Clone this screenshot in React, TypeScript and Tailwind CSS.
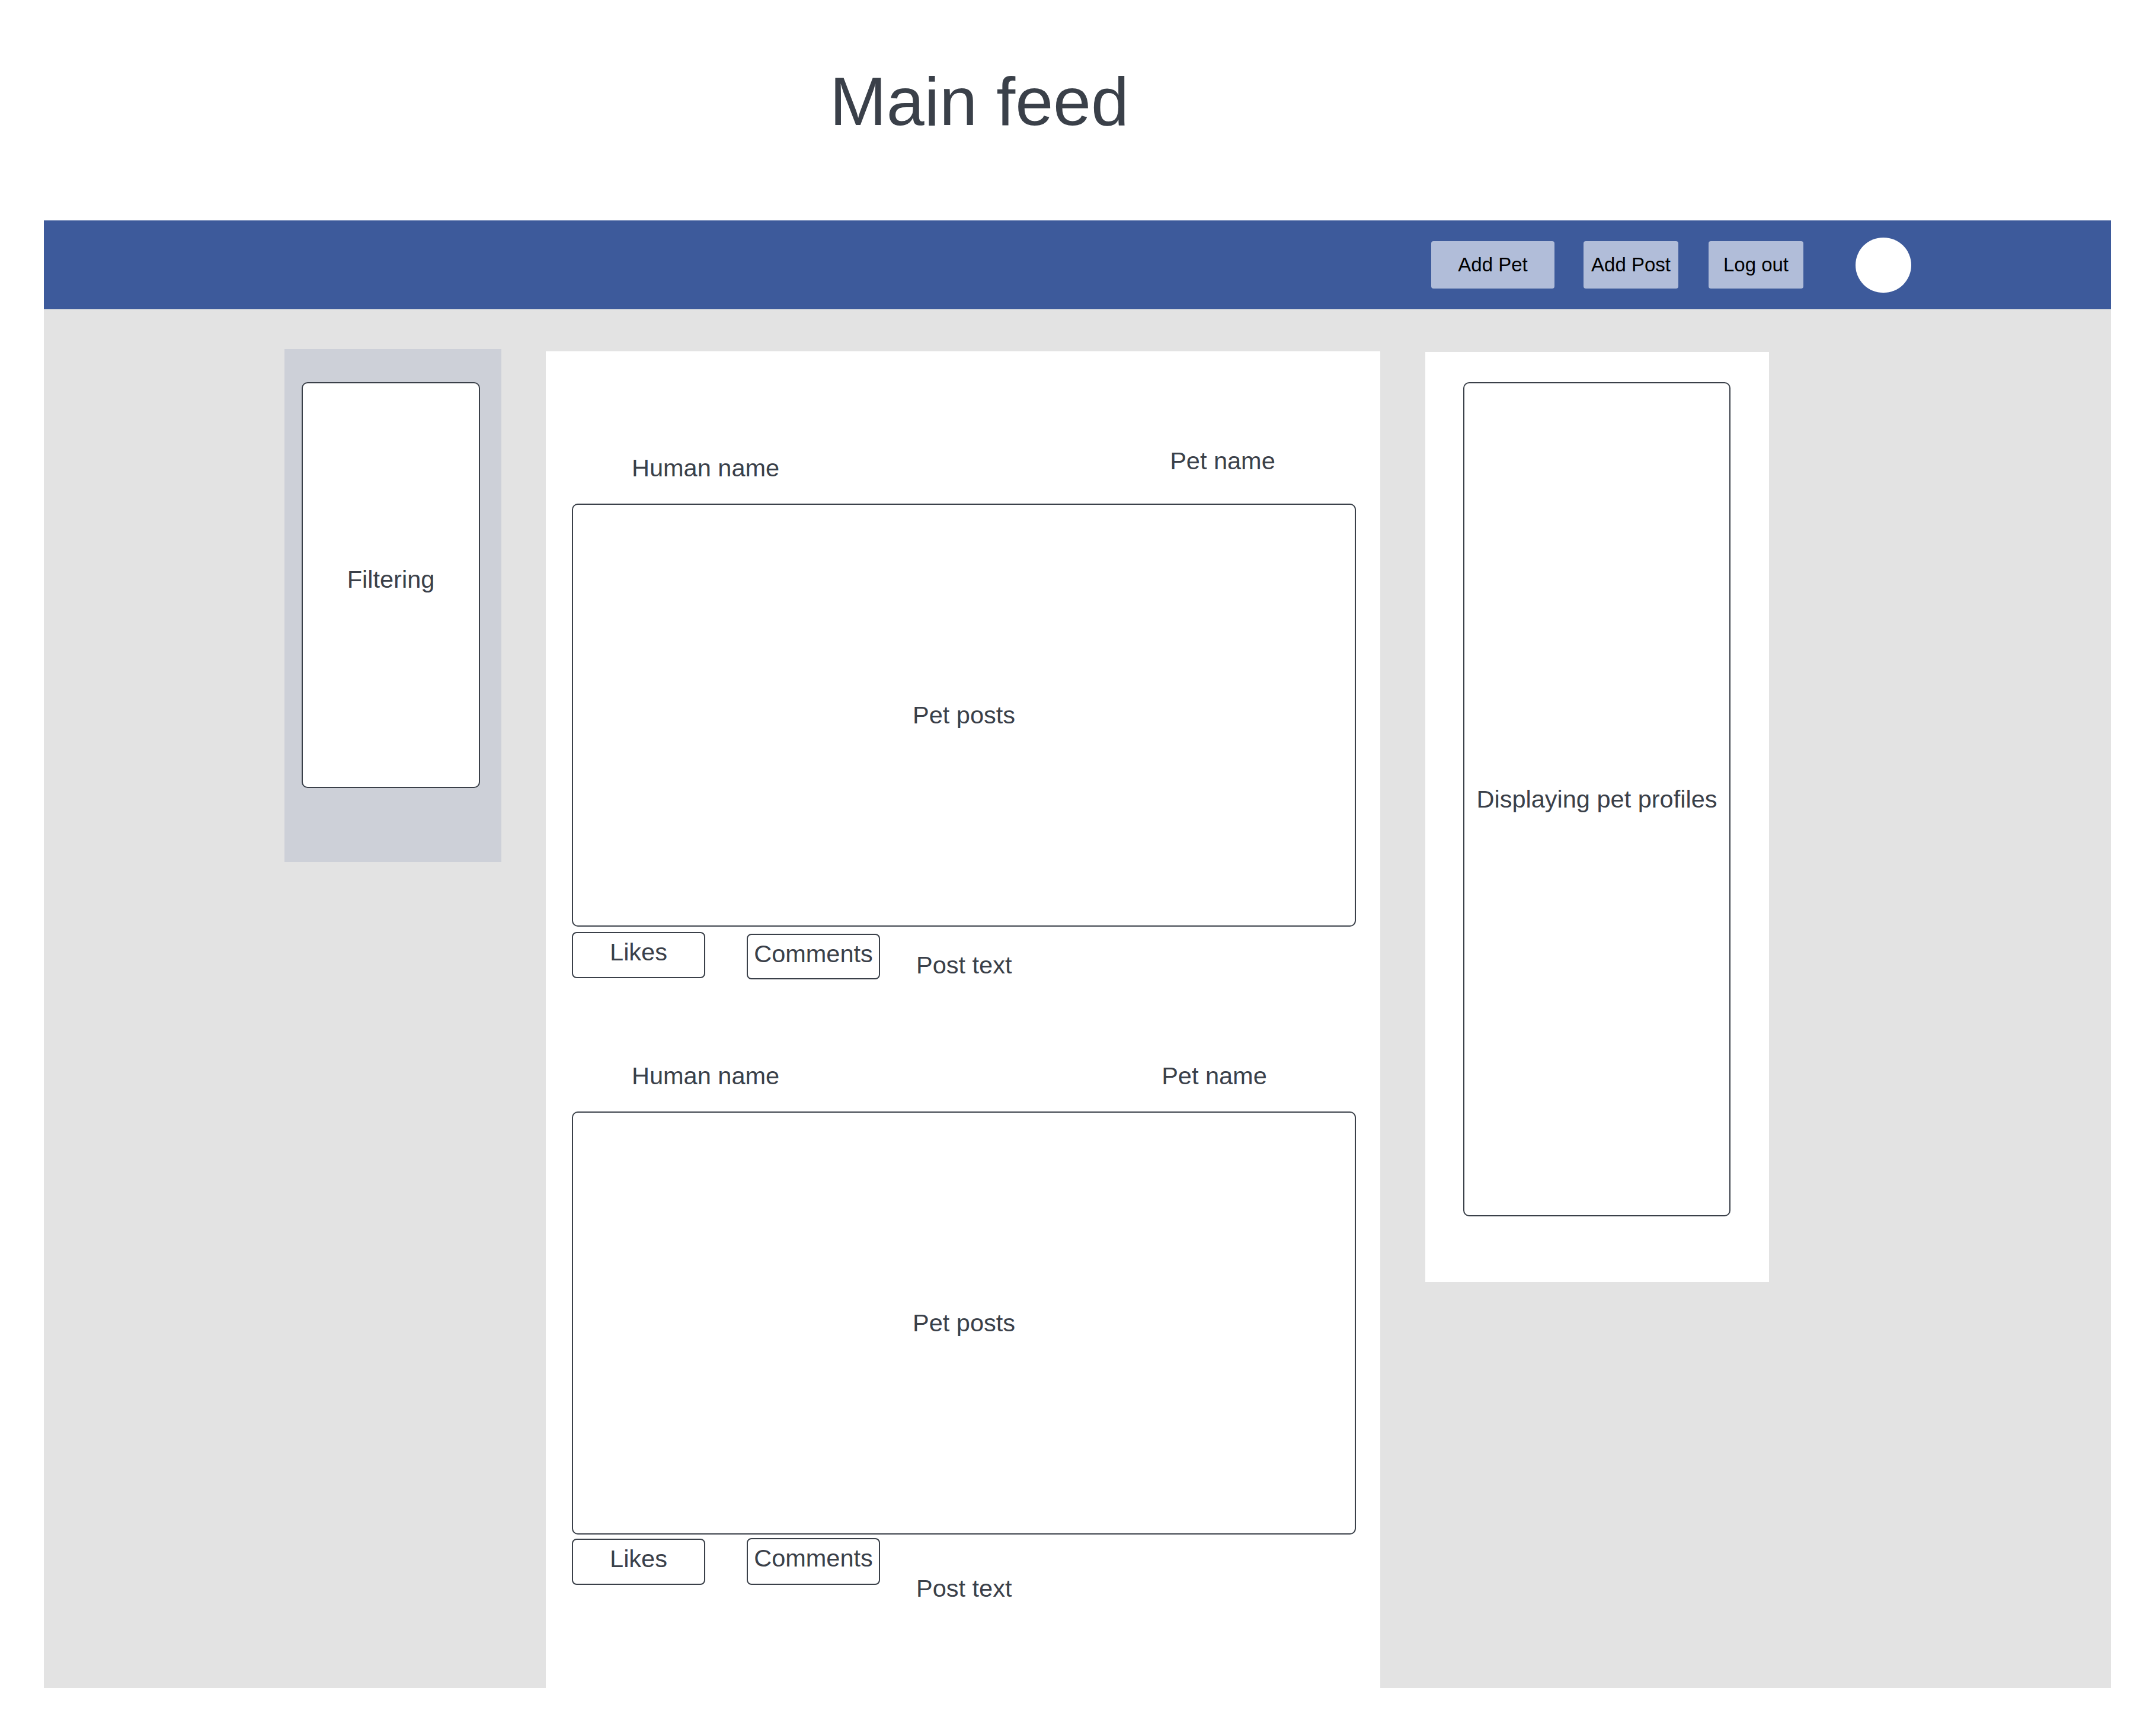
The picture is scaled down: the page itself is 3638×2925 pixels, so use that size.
import React from "react";

const txt = "text-[41.5px] leading-[48px] text-[#3a4049]";

function ActionBtn({ label, extra }: { label: string; extra: string }) {
  return (
    <div
      className={`w-[225px] border-2 border-[#3a4049] rounded-[8px] pt-[8px] text-center ${txt} ${extra}`}
    >
      {label}
    </div>
  );
}

function PostBox() {
  return (
    <div className="ml-[44px] w-[1323px] h-[714px] border-2 border-[#3a4049] rounded-[10px] flex items-center justify-center">
      <span className={txt}>Pet posts</span>
    </div>
  );
}

export default function App() {
  return (
    <div
      className="w-[3638px] h-[2925px] bg-white"
      style={{ fontFamily: '"Liberation Sans", Arial, sans-serif' }}
    >
      {/* Title */}
      <div className="pt-[106px] pl-[1400px]">
        <div className="text-[115px] leading-[130px] text-[#3a4049]">Main feed</div>
      </div>

      <div className="ml-[74px] mt-[136px] w-[3488px]">
        {/* Header bar */}
        <div className="h-[150px] bg-[#3d5a9b] flex items-center pl-[2341px]">
          <div className="w-[208px] h-[80px] rounded-[4px] bg-[#b1bdd9] flex items-center justify-center text-[33px] text-black">
            Add Pet
          </div>
          <div className="ml-[49px] w-[160px] h-[80px] rounded-[4px] bg-[#b1bdd9] flex items-center justify-center text-[33px] text-black">
            Add Post
          </div>
          <div className="ml-[51px] w-[160px] h-[80px] rounded-[4px] bg-[#b1bdd9] flex items-center justify-center text-[33px] text-black">
            Log out
          </div>
          <div className="ml-[88px] w-[94px] h-[93px] rounded-full bg-white" />
        </div>

        {/* Body */}
        <div className="h-[2327px] bg-[#e3e3e3] flex items-start pl-[406px]">
          {/* Left filter panel */}
          <div className="mt-[67px] w-[366px] h-[866px] bg-[#cdd0d8] pl-[29px] pt-[56px]">
            <div className="w-[301px] h-[685px] bg-white border-2 border-[#3a4049] rounded-[10px] flex items-center justify-center pb-[20px]">
              <span className={txt}>Filtering</span>
            </div>
          </div>

          {/* Center feed */}
          <div className="ml-[75px] mt-[71px] w-[1408px] h-[2256px] bg-white flex flex-col pt-[161px]">
            {/* Post 1 */}
            <div className="flex items-start">
              <div className={`ml-[145px] mt-[12px] ${txt}`}>Human name</div>
              <div className={`ml-[659px] ${txt}`}>Pet name</div>
            </div>
            <div className="mt-[36px]">
              <PostBox />
            </div>
            <div className="mt-[9px] ml-[44px] flex items-start h-[80px]">
              <ActionBtn label="Likes" extra="h-[78px]" />
              <ActionBtn label="Comments" extra="ml-[70px] mt-[3px] h-[77px]" />
              <div className={`ml-[61px] mt-[32px] ${txt}`}>Post text</div>
            </div>

            {/* Post 2 */}
            <div className="mt-[139px] flex items-start">
              <div className={`ml-[145px] ${txt}`}>Human name</div>
              <div className={`ml-[645px] ${txt}`}>Pet name</div>
            </div>
            <div className="mt-[36px]">
              <PostBox />
            </div>
            <div className="mt-[6px] ml-[44px] flex items-start">
              <ActionBtn label="Likes" extra="mt-[1px] h-[78px]" />
              <ActionBtn label="Comments" extra="ml-[70px] h-[79px]" />
              <div className={`ml-[61px] mt-[61px] ${txt}`}>Post text</div>
            </div>
          </div>

          {/* Right profiles panel */}
          <div className="ml-[76px] mt-[72px] w-[580px] h-[1570px] bg-white pl-[64px] pt-[51px]">
            <div className="w-[451px] h-[1408px] border-2 border-[#3a4049] rounded-[10px] flex items-center justify-center">
              <span className={txt}>Displaying pet profiles</span>
            </div>
          </div>
        </div>
      </div>
    </div>
  );
}
